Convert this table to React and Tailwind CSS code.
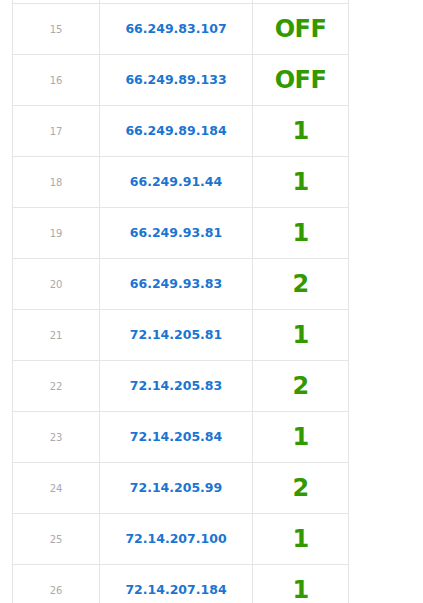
const ROWS = [
  { n: 15, ip: '66.249.83.107', v: 'OFF' },
  { n: 16, ip: '66.249.89.133', v: 'OFF' },
  { n: 17, ip: '66.249.89.184', v: '1' },
  { n: 18, ip: '66.249.91.44', v: '1' },
  { n: 19, ip: '66.249.93.81', v: '1' },
  { n: 20, ip: '66.249.93.83', v: '2' },
  { n: 21, ip: '72.14.205.81', v: '1' },
  { n: 22, ip: '72.14.205.83', v: '2' },
  { n: 23, ip: '72.14.205.84', v: '1' },
  { n: 24, ip: '72.14.205.99', v: '2' },
  { n: 25, ip: '72.14.207.100', v: '1' },
  { n: 26, ip: '72.14.207.184', v: '1' },
];

function Row({ n, ip, v }) {
  return (
    <div className="grid h-[51px] grid-cols-[87px_153px_96px] border-b border-[#e5e5e5]">
      <div className="flex items-center justify-center border-r border-[#e5e5e5] text-[10px] text-[#aaaaaa]">
        {n}
      </div>
      <div className="flex items-center justify-center border-r border-[#e5e5e5] text-[12.5px] font-bold text-[#1a75d2]">
        {ip}
      </div>
      <div className="flex items-center justify-center border-r border-[#e5e5e5] pb-px text-[24px] font-bold tracking-[-0.5px] text-[#339900]">
        {v}
      </div>
    </div>
  );
}

export default function App() {
  return (
    <div className="h-screen w-full overflow-hidden bg-white font-['DejaVu_Sans',sans-serif]">
      <div className="ml-3 w-[337px] border-l border-[#e5e5e5]">
        {/* tail of the row above, scrolled out of view */}
        <div className="grid h-[4px] grid-cols-[87px_153px_96px] border-b border-[#e5e5e5]">
          <div className="border-r border-[#e5e5e5]" />
          <div className="border-r border-[#e5e5e5]" />
          <div className="border-r border-[#e5e5e5]" />
        </div>
        {ROWS.map((r) => (
          <Row key={r.n} {...r} />
        ))}
      </div>
    </div>
  );
}
